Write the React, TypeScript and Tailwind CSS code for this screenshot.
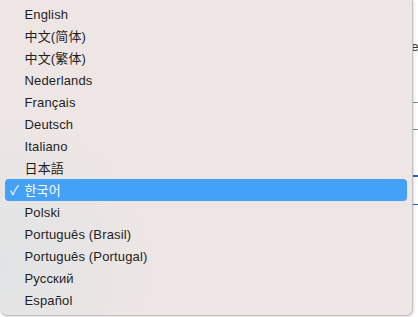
import React from 'react';

const languages = [
  'English',
  '中文(简体)',
  '中文(繁体)',
  'Nederlands',
  'Français',
  'Deutsch',
  'Italiano',
  '日本語',
  '한국어',
  'Polski',
  'Português (Brasil)',
  'Português (Portugal)',
  'Русский',
  'Español',
];

const selected = '한국어';

const App: React.FC = () => {
  return (
    <div className="relative h-[317px] w-[418px] overflow-hidden bg-white font-['Liberation_Sans','Noto_Sans_CJK_SC',sans-serif]">
      {/* page behind the menu */}
      <div className="ml-[404px] flex flex-col">
        <div className="mt-[40px] h-[14px] text-[13px] leading-[14px] text-[#333]">Le</div>
        <div className="mt-[48px] h-px bg-[#8c8c8c]" />
        <div className="mt-[26px] h-px bg-[#8c8c8c]" />
        <div className="mt-[45px] h-[1.5px] bg-[#2a62c6]" />
        <div className="mt-[27px] h-[1.5px] bg-[#2a62c6]" />
      </div>

      {/* popup menu */}
      <div className="absolute left-0 top-0 h-[316px] w-[413px] rounded-b-[7px] border-b border-r border-[#c6c1bf] bg-[#eee6e4] bg-[radial-gradient(circle_at_0%_85%,#e1e4e5_0%,rgba(238,230,228,0)_32%)] pt-[3px] shadow-[1px_1px_3px_rgba(0,0,0,0.15)]">
        {languages.map((lang) => {
          const active = lang === selected;
          return (
            <div
              key={lang}
              className={
                active
                  ? 'mx-[5px] flex h-[22px] items-center rounded-[4px] bg-[#43a1f8] text-white'
                  : 'mx-[5px] flex h-[22px] items-center text-[#1e1e1e]'
              }>
              <span className="w-[19.5px] pl-[5px] text-[13px] leading-none">
                {active ? '✓' : ''}
              </span>
              <span
                className={
                  active
                    ? "text-[13px] leading-none tracking-[0.15px] font-['Liberation_Sans','Noto_Sans_CJK_KR',sans-serif]"
                    : 'text-[13px] leading-none tracking-[0.15px]'
                }>
                {lang}
              </span>
            </div>
          );
        })}
      </div>
    </div>
  );
};

export default App;
